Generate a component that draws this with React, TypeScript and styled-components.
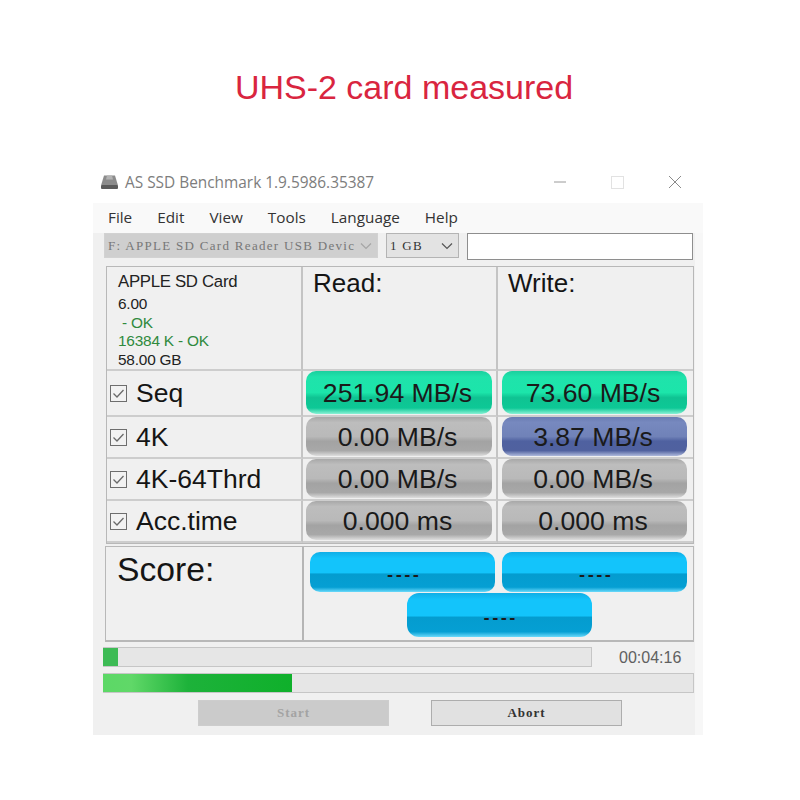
import React from "react";
import styled, { createGlobalStyle } from "styled-components";

const GlobalStyle = createGlobalStyle`
  html, body {
    margin: 0;
    padding: 0;
    background: #fff;
  }
  * {
    box-sizing: border-box;
  }
`;

const Page = styled.div`
  width: 800px;
  height: 800px;
  overflow: hidden;
  background: #fff;
  font-family: "Liberation Sans", Arial, sans-serif;
`;

const Heading = styled.h1`
  margin: 0;
  height: 172px;
  padding: 66px 0 0 8px;
  text-align: center;
  font-size: 34px;
  line-height: 42px;
  font-weight: 400;
  color: #d9253f;
`;

const Frame = styled.div`
  width: 610px;
  margin-left: 93px;
`;

const TitleBar = styled.div`
  height: 31px;
  display: flex;
  align-items: center;
  padding: 0 0 11px 7px;
`;

const TitleText = styled.span`
  margin-left: 6px;
  width: 428px;
  font-family: "Open Sans", sans-serif;
  font-size: 15.4px;
  color: #7d7d7d;
  white-space: nowrap;
`;

const WindowControls = styled.div`
  display: flex;
  align-items: center;
  gap: 44px;
`;

const Client = styled.div`
  height: 532px;
  background: #f0f0f0;
  border-right: 8px solid #f7f7f7;
`;

const MenuBar = styled.div`
  height: 30px;
  margin-right: -8px;
  background: #f9f9f9;
  display: flex;
  align-items: center;
  gap: 25px;
  padding: 0 0 3px 15px;
`;

const MenuItem = styled.span`
  font-family: "Open Sans", sans-serif;
  font-size: 15.3px;
  color: #333;
`;

const Toolbar = styled.div`
  height: 33px;
  display: flex;
  gap: 8px;
  padding: 0 0 6px 11px;
  align-items: flex-start;
`;

const Combo = styled.div<{ $width: number; $disabled?: boolean }>`
  width: ${(p) => p.$width}px;
  height: 25px;
  display: flex;
  align-items: center;
  justify-content: space-between;
  padding: 0 5px 0 3px;
  background: ${(p) => (p.$disabled ? "#cfcfcf" : "#e3e3e3")};
  border: 1px solid ${(p) => (p.$disabled ? "#d2d2d2" : "#b4b4b4")};
  font-family: "Liberation Serif", serif;
  font-size: 13px;
  letter-spacing: 1.3px;
  color: ${(p) => (p.$disabled ? "#777" : "#333")};
  white-space: nowrap;
  overflow: hidden;
`;

const TextBox = styled.div`
  width: 226px;
  height: 27px;
  background: #fff;
  border: 1px solid #8e8e8e;
`;

const Grid = styled.div`
  width: 588px;
  margin-left: 13px;
  display: grid;
  grid-template-columns: 196px 195px 195px;
  grid-template-rows: 104px 46px 42px 42px 42px;
  border: 1px solid #b8b8b8;
`;

const Cell = styled.div`
  border-right: 2px solid #c4c4c4;
  border-bottom: 2px solid #cdcdcd;
  min-width: 0;
  &:nth-child(3n) {
    border-right: 0;
  }
`;

const InfoCell = styled(Cell)`
  padding: 6px 0 0 11px;
  display: flex;
  flex-direction: column;
  font-size: 15.4px;
  line-height: 18.6px;
  color: #222;
`;

const DriveName = styled.div`
  font-size: 16.8px;
  line-height: 18px;
  margin-bottom: 4px;
  letter-spacing: -0.3px;
`;

const InfoLine = styled.div<{ $ok?: boolean }>`
  color: ${(p) => (p.$ok ? "#2f8a3d" : "#222")};
  letter-spacing: -0.2px;
`;

const HeaderCell = styled(Cell)`
  padding: 1px 0 0 10px;
  font-size: 26px;
  line-height: 30px;
  color: #151515;
`;

const RowLabel = styled(Cell)`
  display: flex;
  align-items: center;
  gap: 9px;
  padding: 1px 0 0 3px;
  font-size: 26.5px;
  color: #151515;
  white-space: nowrap;
`;

const ResultCell = styled(Cell)`
  padding: 0 4px 1px 3px;
  display: flex;
  &:nth-child(3n) {
    padding: 0 6px 1px 4px;
  }
`;

type Tone = "green" | "grey" | "blue" | "cyan";

const tones: Record<Tone, string> = {
  green: `linear-gradient(#1ccf9e 0%, #1fe3ab 14%, #1ce5aa 50%, #0fc392 62%, #0dc896 86%, #8af2d5 100%)`,
  grey: `linear-gradient(#a8a8a8 0%, #bdbdbd 14%, #b9b9b9 50%, #a3a3a3 62%, #a8a8a8 86%, #dedede 100%)`,
  blue: `linear-gradient(#6a7cb3 0%, #7789bf 14%, #7082b8 50%, #4f61a0 62%, #50619f 86%, #aeb9dc 100%)`,
  cyan: `linear-gradient(#10aee6 0%, #13c4fb 16%, #13c4fb 52%, #049ccf 55%, #059fd3 88%, #6adafb 100%)`,
};

const Pill = styled.div<{ $tone: Tone }>`
  flex: 1;
  display: flex;
  align-items: center;
  justify-content: center;
  padding: 2px 3px 0 0;
  border-radius: 10px;
  background: ${(p) => tones[p.$tone]};
  font-size: 26.6px;
  color: #1a1a1a;
  white-space: nowrap;
`;

const ScorePanel = styled.div`
  width: 589px;
  height: 96px;
  margin: 2px 0 0 12px;
  display: grid;
  grid-template-columns: 198px 1fr;
  border: 1px solid #b8b8b8;
  border-bottom: 2px solid #b8b8b8;
`;

const ScoreLabel = styled.div`
  border-right: 2px solid #b5b5b5;
  padding: 2px 0 0 11px;
  font-size: 33.7px;
  line-height: 40px;
  color: #151515;
`;

const ScoreBoard = styled.div`
  padding: 5px 5px 0 6px;
  display: grid;
  grid-template-columns: 185px 185px;
  grid-template-rows: 40px 44px;
  column-gap: 7px;
  row-gap: 1px;
`;

const ScorePill = styled(Pill)<{ $wide?: boolean }>`
  font-family: "Liberation Mono", monospace;
  font-size: 16px;
  letter-spacing: -1px;
  font-weight: 700;
  padding: 8px 0 0;
  ${(p) =>
    p.$wide &&
    `
    grid-column: 1 / span 2;
    justify-self: center;
    width: 185px;
    margin-left: 1px;
    border-radius: 12px;
  `}
`;

const ProgressRow = styled.div<{ $gap: number }>`
  display: flex;
  align-items: center;
  height: 20px;
  margin: ${(p) => p.$gap}px 0 0 10px;
`;

const Track = styled.div<{ $width: number }>`
  width: ${(p) => p.$width}px;
  height: 20px;
  background: #e6e6e6;
  border: 1px solid #c6c6c6;
  border-width: 1px 1px 1px 0;
`;

const Fill = styled.div<{ $sweep?: boolean }>`
  height: 100%;
  background: ${(p) =>
    p.$sweep
      ? "linear-gradient(90deg, #5cd866 0%, #60d868 15%, #1db23a 45%, #0fb02b 100%)"
      : "#3dbb55"};
`;

const Clock = styled.span`
  margin: 2px 0 0 27px;
  font-size: 16px;
  color: #606060;
`;

const ButtonRow = styled.div`
  display: flex;
  gap: 42px;
  margin: 7px 0 0 105px;
`;

const ActionButton = styled.button<{ $disabled?: boolean }>`
  width: 191px;
  height: 26px;
  padding: 0;
  background: ${(p) => (p.$disabled ? "#cbcbcb" : "#e1e1e1")};
  border: 1px solid ${(p) => (p.$disabled ? "#cdcdcd" : "#adadad")};
  font-family: "Liberation Serif", serif;
  font-size: 13px;
  letter-spacing: 1px;
  font-weight: 700;
  color: ${(p) => (p.$disabled ? "#a3a3a3" : "#333")};
`;

const DiskIcon = () => (
  <svg width="19" height="16" viewBox="0 0 19 16">
    <path d="M4 1.5h11l3 10H1z" fill="#8c8c8c" />
    <path d="M7 1.5h5l1 4H6z" fill="#b3b3b3" />
    <rect x="1" y="11" width="17" height="4" rx="1" fill="#5b5b5b" />
  </svg>
);

const CheckIcon = () => (
  <svg width="17" height="17" viewBox="0 0 17 17">
    <rect x="0.5" y="0.5" width="16" height="16" fill="#f2f2f2" stroke="#6e6e6e" />
    <path d="M3.5 8.5l3.5 3.5 6.5-7" fill="none" stroke="#6a6a6a" strokeWidth="1.3" />
  </svg>
);

const Chevron = ({ color }: { color: string }) => (
  <svg width="12" height="8" viewBox="0 0 12 8">
    <path d="M1 1.5l5 5 5-5" fill="none" stroke={color} strokeWidth="1.2" />
  </svg>
);

const MinimizeIcon = () => (
  <svg width="14" height="14" viewBox="0 0 14 14">
    <path d="M1 7h12" stroke="#9a9a9a" strokeWidth="1" />
  </svg>
);

const MaximizeIcon = () => (
  <svg width="13" height="13" viewBox="0 0 13 13">
    <rect x="0.5" y="0.5" width="12" height="12" fill="none" stroke="#e2e2e2" />
  </svg>
);

const CloseIcon = () => (
  <svg width="14" height="14" viewBox="0 0 14 14">
    <path d="M1 1l12 12M13 1L1 13" stroke="#8a8a8a" strokeWidth="1" />
  </svg>
);

const menu = ["File", "Edit", "View", "Tools", "Language", "Help"];

const rows: { label: string; read: string; write: string; readTone: Tone; writeTone: Tone }[] = [
  { label: "Seq", read: "251.94 MB/s", write: "73.60 MB/s", readTone: "green", writeTone: "green" },
  { label: "4K", read: "0.00 MB/s", write: "3.87 MB/s", readTone: "grey", writeTone: "blue" },
  { label: "4K-64Thrd", read: "0.00 MB/s", write: "0.00 MB/s", readTone: "grey", writeTone: "grey" },
  { label: "Acc.time", read: "0.000 ms", write: "0.000 ms", readTone: "grey", writeTone: "grey" },
];

export default function App() {
  return (
    <Page>
      <GlobalStyle />
      <Heading>UHS-2 card measured</Heading>
      <Frame>
        <TitleBar>
          <DiskIcon />
          <TitleText>AS SSD Benchmark 1.9.5986.35387</TitleText>
          <WindowControls>
            <MinimizeIcon />
            <MaximizeIcon />
            <CloseIcon />
          </WindowControls>
        </TitleBar>
        <Client>
          <MenuBar>
            {menu.map((item) => (
              <MenuItem key={item}>{item}</MenuItem>
            ))}
          </MenuBar>
          <Toolbar>
            <Combo $width={274} $disabled>
              F: APPLE SD Card Reader USB Devic
              <Chevron color="#a5a5a5" />
            </Combo>
            <Combo $width={73}>
              1 GB
              <Chevron color="#555" />
            </Combo>
            <TextBox />
          </Toolbar>
          <Grid>
            <InfoCell>
              <DriveName>APPLE SD Card</DriveName>
              <InfoLine>6.00</InfoLine>
              <InfoLine $ok>&nbsp;- OK</InfoLine>
              <InfoLine $ok>16384 K - OK</InfoLine>
              <InfoLine>58.00 GB</InfoLine>
            </InfoCell>
            <HeaderCell>Read:</HeaderCell>
            <HeaderCell>Write:</HeaderCell>
            {rows.map((row) => (
              <React.Fragment key={row.label}>
                <RowLabel>
                  <CheckIcon />
                  {row.label}
                </RowLabel>
                <ResultCell>
                  <Pill $tone={row.readTone}>{row.read}</Pill>
                </ResultCell>
                <ResultCell>
                  <Pill $tone={row.writeTone}>{row.write}</Pill>
                </ResultCell>
              </React.Fragment>
            ))}
          </Grid>
          <ScorePanel>
            <ScoreLabel>Score:</ScoreLabel>
            <ScoreBoard>
              <ScorePill $tone="cyan">----</ScorePill>
              <ScorePill $tone="cyan">----</ScorePill>
              <ScorePill $tone="cyan" $wide>
                ----
              </ScorePill>
            </ScoreBoard>
          </ScorePanel>
          <ProgressRow $gap={5}>
            <Track $width={489}>
              <Fill style={{ width: "3%" }} />
            </Track>
            <Clock>00:04:16</Clock>
          </ProgressRow>
          <ProgressRow $gap={6}>
            <Track $width={591}>
              <Fill $sweep style={{ width: "32%" }} />
            </Track>
          </ProgressRow>
          <ButtonRow>
            <ActionButton $disabled disabled>
              Start
            </ActionButton>
            <ActionButton>Abort</ActionButton>
          </ButtonRow>
        </Client>
      </Frame>
    </Page>
  );
}
